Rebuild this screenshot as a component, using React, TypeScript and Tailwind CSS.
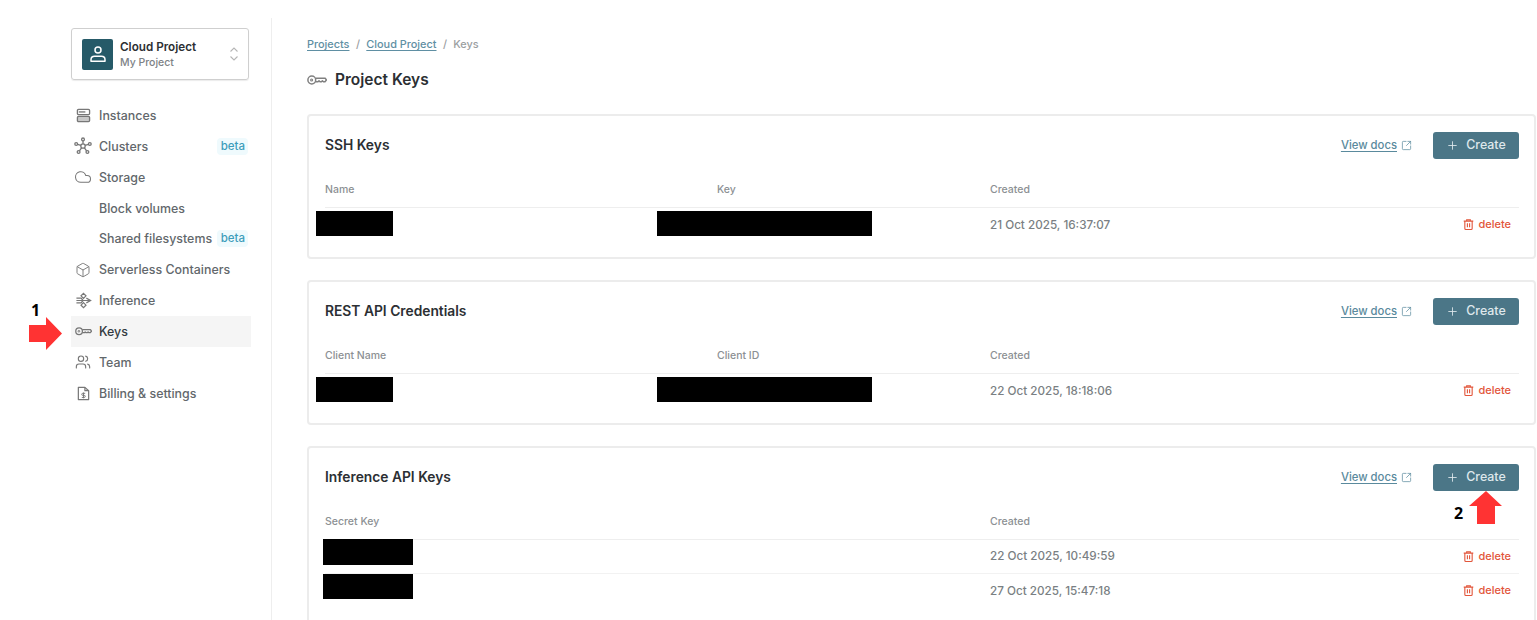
import type { ReactNode } from 'react'
import { Box, Cloud, Plus, SquareArrowOutUpRight, Users } from 'lucide-react'

function KeyIcon({ className }: { className?: string }) {
  return (
    <svg viewBox="0 0 20 10" fill="none" stroke="currentColor" strokeWidth="1.5" className={className}>
      <circle cx="4.8" cy="5" r="3.9" />
      <circle cx="4.6" cy="5" r="1" strokeWidth="1.1" />
      <path d="M8.6 3.2h9.6l1.2 1.8-1.4 1.7h-1.6l-1-1-1 1h-1.4l-1-1-1 1H8.6" strokeLinejoin="round" />
    </svg>
  )
}

function ServerIcon() {
  return (
    <svg viewBox="0 0 16 16" fill="none" stroke="currentColor" strokeWidth="1.4" className="w-[15px] h-[15px]">
      <rect x="1.5" y="1.5" width="13" height="5.5" rx="1.2" />
      <rect x="1.5" y="9" width="13" height="5.5" rx="1.2" fill="currentColor" fillOpacity="0.4" />
      <path d="M3 4.2h7" />
    </svg>
  )
}

function ClusterIcon() {
  return (
    <svg viewBox="0 0 18 18" fill="none" stroke="currentColor" strokeWidth="1.3" className="w-[18px] h-[18px]">
      <circle cx="9" cy="9" r="2.2" />
      <circle cx="9" cy="2.4" r="1.4" />
      <circle cx="2.2" cy="7" r="1.4" />
      <circle cx="15.8" cy="7" r="1.4" />
      <circle cx="4.6" cy="15" r="1.4" />
      <circle cx="13.4" cy="15" r="1.4" />
      <path d="M9 3.8v3M3.6 7.4l3.3 1M14.4 7.4l-3.3 1M5.4 13.8l2.2-3M12.6 13.8l-2.2-3" />
    </svg>
  )
}

function InferenceIcon() {
  return (
    <svg viewBox="0 0 18 18" fill="none" stroke="currentColor" strokeWidth="1.3" className="w-[17px] h-[17px]">
      <path d="M9 1.5l2.6 2.6L9 6.7 6.4 4.1zM9 11.3l2.6 2.6L9 16.5l-2.6-2.6z" />
      <path d="M1.5 6.5h5l2 2.5h8M1.5 11.5h5l2-2.5M1.5 9h7" />
      <path d="M12 6.5l4.5 2.5-4.5 2.5" />
    </svg>
  )
}

function BillingIcon() {
  return (
    <svg viewBox="0 0 16 16" fill="none" stroke="currentColor" strokeWidth="1.3" className="w-[15px] h-[15px]">
      <path d="M2.5 1.5h7L13.5 5v9.5h-11z" strokeLinejoin="round" />
      <path d="M9.5 1.5V5h4" strokeLinejoin="round" />
      <path d="M9.8 7.8H7.2a1 1 0 0 0 0 2.2h1.6a1 1 0 0 1 0 2.2H6.2M8 6.9v6.2" strokeWidth="1" />
    </svg>
  )
}

function TrashIcon() {
  return (
    <svg viewBox="0 0 12 12" fill="none" stroke="currentColor" strokeWidth="1.2" className="w-[11px] h-[11px]">
      <path d="M0.8 2.3h10.4M4 2.2V0.8h4v1.4" />
      <path d="M2 2.3v8a1.1 1.1 0 0 0 1.1 1.1h5.8A1.1 1.1 0 0 0 10 10.3V2.3" />
      <path d="M4.8 4.5v4.5M7.2 4.5v4.5" />
    </svg>
  )
}

function UserAvatarIcon() {
  return (
    <svg viewBox="0 0 18 18" fill="none" stroke="currentColor" strokeWidth="1.5" className="w-[18px] h-[18px] text-white">
      <circle cx="9" cy="5" r="3" />
      <path d="M2 16.2v-1.5c0-2 1.6-3.4 3.6-3.4h6.8c2 0 3.6 1.4 3.6 3.4v1.5z" strokeLinejoin="round" />
    </svg>
  )
}

function UpDownIcon() {
  return (
    <svg viewBox="0 0 10 16" fill="none" stroke="#b5b5b5" strokeWidth="1.1" className="w-[10px] h-[16px]">
      <path d="M1.5 5.5L5 2l3.5 3.5M1.5 10.5L5 14l3.5-3.5" />
    </svg>
  )
}

function Beta() {
  return <span className="block bg-[#effafd] text-[#3d9dbb] text-[11.5px] font-medium leading-[17px] pl-[4px] pr-[3px] rounded-sm">beta</span>
}

function NavItem({ icon, label, active, badge }: { icon?: ReactNode; label: string; active?: boolean; badge?: boolean }) {
  return (
    <div className={`h-[30.9px] flex items-center pr-[3px] ${active ? 'bg-[#f5f5f5] text-[#333a40]' : 'text-[#62676b]'}`}>
      <div className="w-[24px] mr-[4px] flex justify-center items-center text-[#777]">{icon}</div>
      <span className="text-[12.4px] font-medium pt-[2px]">{label}</span>
      {badge && <div className="ml-auto"><Beta /></div>}
    </div>
  )
}

function Sidebar() {
  return (
    <aside className="w-[272px] shrink-0 mt-[18px] border-r border-[#eeeeee] pl-[71px] pr-[20px] pt-[10px]">
      <div className="w-[178px] h-[52px] border border-[#cfcfcf] rounded-[3px] flex items-center pl-[10px] pr-[8px] shadow-[0_1px_1px_rgba(0,0,0,0.08)]">
        <div className="w-[31px] h-[31px] bg-[#265a68] rounded-[2px] flex items-center justify-center">
          <UserAvatarIcon />
        </div>
        <div className="ml-[7px] flex flex-col pt-[1px]">
          <span className="text-[11.7px] leading-[15px] font-semibold text-[#2c2f33]">Cloud Project</span>
          <span className="text-[10.5px] leading-[15px] font-medium text-[#7d8286]">My Project</span>
        </div>
        <div className="ml-auto mr-[1px]"><UpDownIcon /></div>
      </div>
      <nav className="mt-[19.7px]">
        <NavItem icon={<ServerIcon />} label="Instances" />
        <NavItem icon={<ClusterIcon />} label="Clusters" badge />
        <NavItem icon={<Cloud className="w-[18px] h-[18px]" strokeWidth={1.4} />} label="Storage" />
        <NavItem label="Block volumes" />
        <NavItem label="Shared filesystems" badge />
        <NavItem icon={<Box className="w-[16px] h-[16px]" strokeWidth={1.4} />} label="Serverless Containers" />
        <NavItem icon={<InferenceIcon />} label="Inference" />
        <NavItem icon={<KeyIcon className="w-[17px] h-[8.5px]" />} label="Keys" active />
        <NavItem icon={<Users className="w-[16px] h-[16px]" strokeWidth={1.7} />} label="Team" />
        <NavItem icon={<BillingIcon />} label="Billing & settings" />
      </nav>
    </aside>
  )
}

function DeleteLink() {
  return (
    <a className="flex items-center gap-[4px] text-[#e2553a] text-[11px] font-medium">
      <TrashIcon />
      delete
    </a>
  )
}

function Redacted({ left, top, width, height }: { left: number; top: number; width: number; height: number }) {
  return <div className="absolute bg-black" style={{ left, top, width, height }} />
}

interface CardProps {
  title: string
  columns: string[]
  rows: string[]
  className?: string
}

function KeyCard({ title, columns, rows, className }: CardProps) {
  const isThree = columns.length === 3
  return (
    <section className={`border-2 border-[#ececec] rounded-[4px] pl-[16px] pr-[15px] shrink-0 ${className ?? ''}`}>
      <div className="h-[58px] flex items-center justify-between">
        <h2 className="text-[13.8px] font-semibold text-[#2c2f33]">{title}</h2>
        <div className="flex items-center">
          <a className="mt-[1px] text-[11.3px] font-medium text-[#5a8a9d] underline underline-offset-2">View docs</a>
          <SquareArrowOutUpRight className="w-[11px] h-[11px] ml-[4px] text-[#5a8a9d]" strokeWidth={1.6} />
          <button className="ml-[21px] w-[86px] h-[27px] bg-[#4b7687] rounded-[3px] text-[#dfe8ec] text-[12.4px] font-medium flex items-center justify-center gap-[7px]">
            <Plus className="w-[13px] h-[13px]" strokeWidth={1.6} />
            Create
          </button>
        </div>
      </div>
      <div className="h-[34px] pb-[1px] border-b border-[#eeeeee] flex items-center text-[10.5px] font-medium text-[#8c9093]">
        {isThree ? (
          <>
            <span className="w-[392px]">{columns[0]}</span>
            <span className="w-[273px]">{columns[1]}</span>
            <span>{columns[2]}</span>
          </>
        ) : (
          <>
            <span className="w-[665px]">{columns[0]}</span>
            <span>{columns[1]}</span>
          </>
        )}
      </div>
      {rows.map((created) => (
        <div key={created} className="h-[34px] border-b border-[#f2f2f2] last:border-b-0 flex items-center text-[11.7px] font-medium text-[#7a7f83]">
          <span className="ml-[665px] pt-px">{created}</span>
          <div className="ml-auto mr-[8px] -mt-[1px]"><DeleteLink /></div>
        </div>
      ))}
    </section>
  )
}

export default function App() {
  return (
    <div className="relative w-[1537px] h-[620px] overflow-hidden bg-white flex font-['Inter',sans-serif]">
      <Sidebar />
      <main className="flex-1 pl-[35px] pr-px min-w-0">
        <div className="pt-[38px] h-[50px] text-[10.9px] font-medium flex items-center gap-[6.4px] text-[#9a9ea1]">
          <a className="text-[#5f8fa3] underline underline-offset-2">Projects</a>
          <span>/</span>
          <a className="text-[#5f8fa3] underline underline-offset-2">Cloud Project</a>
          <span>/</span>
          <span>Keys</span>
        </div>
        <div className="h-[40px] mt-[9px] pt-[2px] flex items-center gap-[8px]">
          <KeyIcon className="w-[20px] h-[10px] text-[#808080]" />
          <h1 className="text-[15.5px] font-semibold text-[#2c2f33]">Project Keys</h1>
        </div>
        <div className="mt-[15px] flex flex-col gap-[21px]">
          <KeyCard className="h-[145px]" title="SSH Keys" columns={['Name', 'Key', 'Created']} rows={['21 Oct 2025, 16:37:07']} />
          <KeyCard className="h-[145px]" title="REST API Credentials" columns={['Client Name', 'Client ID', 'Created']} rows={['22 Oct 2025, 18:18:06']} />
          <KeyCard className="h-[200px]" title="Inference API Keys" columns={['Secret Key', 'Created']} rows={['22 Oct 2025, 10:49:59', '27 Oct 2025, 15:47:18']} />
        </div>
      </main>

      {/* redactions and annotations drawn over the screenshot */}
      <Redacted left={316} top={211} width={77} height={25} />
      <Redacted left={657} top={211} width={215} height={25} />
      <Redacted left={316} top={377} width={77} height={25} />
      <Redacted left={657} top={377} width={215} height={25} />
      <Redacted left={323} top={539} width={90} height={26} />
      <Redacted left={323} top={574} width={90} height={25} />
      <svg className="absolute left-[29px] top-[317px] w-[33px] h-[33px]" viewBox="0 0 33 33">
        <path d="M0 8h17V0l16 16.5L17 33v-8H0z" fill="#ff3333" />
      </svg>
      <svg className="absolute left-[1469px] top-[491px] w-[33px] h-[33px]" viewBox="0 0 33 33">
        <path d="M17 0l16 15h-7v18H8V15H0z" fill="#ff3333" />
      </svg>
      <span className="absolute left-[31px] top-[300px] text-[16px] leading-[20px] font-bold text-black font-['Noto_Sans',sans-serif]">1</span>
      <span className="absolute left-[1454px] top-[503px] text-[16px] leading-[20px] font-bold text-black font-['Noto_Sans',sans-serif]">2</span>
    </div>
  )
}
